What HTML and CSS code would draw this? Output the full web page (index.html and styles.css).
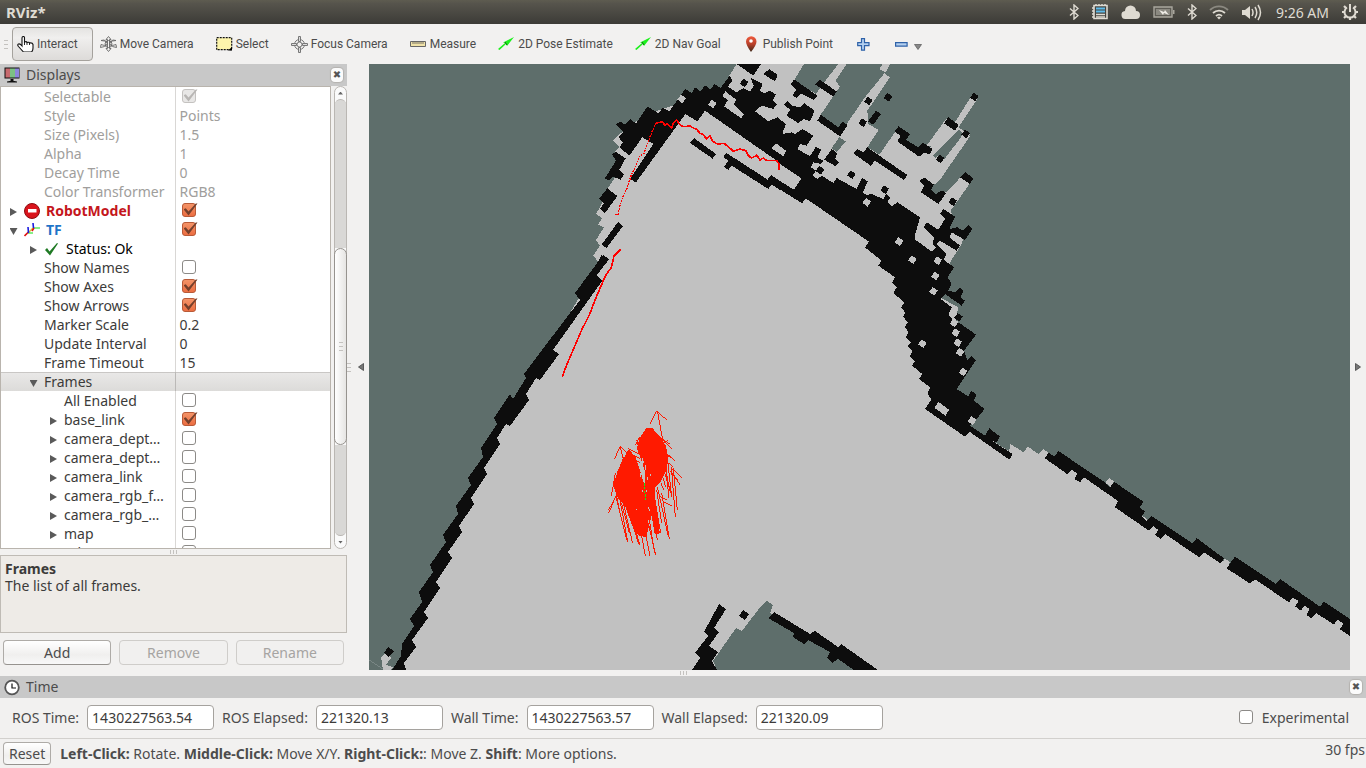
FILE: index.html
```html
<!DOCTYPE html>
<html lang="en">
<head>
<meta charset="utf-8">
<title>RViz*</title>
<link rel="stylesheet" href="styles.css">
</head>
<body>
<header class="titlebar">
  <h1 class="title">RViz*</h1>
  <div class="tray">
    <svg width="10" height="16" viewBox="0 0 10 16"><path d="M1 4.500l8 7L5 15V1l4 3.500-8 7" fill="none" stroke="#dfdbd2" stroke-width="1.400"/></svg>
    <svg width="18" height="17" viewBox="0 0 18 17"><path d="M3 1.500h13v13H3z" fill="#45443f" stroke="#dfdbd2" stroke-width="1.600"/><path d="M5 1v-1M8 1V0M11 1V0M14 1V0M1 4h2M1 7h2M1 10h2M1 13h2" stroke="#dfdbd2" stroke-width="1.400"/><path d="M5 4.500h9M5 7.500h9" stroke="#5db9e8" stroke-width="1.800"/><path d="M5 10.500h9M5 13h9" stroke="#dfdbd2" stroke-width="1.400"/></svg>
    <svg width="20" height="16" viewBox="0 0 20 16"><path d="M5 15a4 4 0 0 1-1-8 5.500 5.500 0 0 1 11 0 4 4 0 0 1 0 8z" fill="#dfdbd2"/></svg>
    <svg width="22" height="14" viewBox="0 0 22 14"><path d="M1 2h18v10H1z" fill="#5e5c55" stroke="#a9a69d" stroke-width="1.400"/><path d="M3 4h14v6H3z" fill="#8b8981"/><path d="M20 5h1.500v4H20z" fill="#a9a69d"/><path d="M6 5l5 2 1-2 4 5-5-2-1 2z" fill="#efece6"/></svg>
    <svg width="10" height="16" viewBox="0 0 10 16"><path d="M1 4.500l8 7L5 15V1l4 3.500-8 7" fill="none" stroke="#dfdbd2" stroke-width="1.400"/></svg>
    <svg width="20" height="15" viewBox="0 0 20 15"><g fill="none" stroke="#dfdbd2" stroke-width="1.800"><path d="M1 5a13 13 0 0 1 18 0" stroke="#8b8981"/><path d="M4 8a9 9 0 0 1 12 0"/><path d="M7 11a4.500 4.500 0 0 1 6 0"/></g><path d="M8 12.500l2-1 2 1-2 2z" fill="#dfdbd2"/></svg>
    <svg width="21" height="17" viewBox="0 0 21 17"><path d="M1 6h3l5-4v13l-5-4H1z" fill="#dfdbd2"/><path d="M11 5q2 3.500 0 7M14 3q3.500 5.500 0 11M17 1q5 7.500 0 15" fill="none" stroke="#dfdbd2" stroke-width="1.500"/></svg>
    <time class="clock">9:26 AM</time>
    <svg width="18" height="18" viewBox="0 0 18 18"><g fill="none" stroke="#dfdbd2"><path d="M6 4.500a5.500 5.500 0 1 0 6 0" stroke-width="2"/><path d="M9 1v8" stroke-width="2"/><path d="M1 9h3M14 9h3M9 14v3M3 3l2 2M15 3l-2 2M3 15l2-2M15 15l-2-2" stroke-width="2.200"/></g></svg>
  </div>
</header>

<nav class="toolbar">
  <span class="grip"></span>
  <button class="tool active"><svg width="17" height="16" viewBox="0 0 17 16"><path d="M5 10V2q0-1.500 1.300-1.500T7.500 2v4q2-1 2.500.500 2-.800 2.500.500 3-.500 3.500 1.500v3.500q0 3-1.500 4h-8L1.500 10.500Q0 8.500 1.500 8 3 7.500 5 10z" fill="#fff" stroke="#111" stroke-width="1.100"/><path d="M7.500 6v3M10 6.500V9M12.500 7v2" stroke="#111" stroke-width=".900"/></svg>Interact</button>
  <button class="tool"><svg width="17" height="16" viewBox="0 0 17 16"><g fill="#f2f1f0" stroke="#666" stroke-width=".900"><path d="M1 4.500l3.500.500 8 5.500 4 1-.500-3-3.500 1L4 4zM16 4.500l-3.500.500-8 5.500-4 1 .500-3 3.500 1L13 4z"/><path d="M8.500.500l2.500 3H9.500v9H11l-2.500 3-2.500-3h1.500v-9H6z"/><circle cx="8.500" cy="8" r="3.500" fill="none"/></g></svg>Move Camera</button>
  <button class="tool"><svg width="17" height="14" viewBox="0 0 17 14"><path d="M.700.700h15v12h-15z" fill="#fdf5ac" stroke="#111" stroke-width="1.200" stroke-dasharray="2 1"/><path d="M16 10v3.500h-4z"/></svg>Select</button>
  <button class="tool"><svg width="17" height="17" viewBox="0 0 17 17"><g fill="none" stroke="#777"><circle cx="8.500" cy="8.500" r="5"/><circle cx="8.500" cy="8.500" r="2.500"/><path d="M7.500.500h2v5h-2zM7.500 11.500h2v5h-2zM.500 7.500h5v2h-5zM11.500 7.500h5v2h-5z" fill="#ddd"/></g></svg>Focus Camera</button>
  <button class="tool"><svg width="17" height="8" viewBox="0 0 17 8"><path d="M.500 1.500h15v5h-15z" fill="#f0e2a8" stroke="#666"/><path d="M3 2v2M5 2v2M7 2v2M9 2v2M11 2v2M13 2v2" stroke="#555" stroke-width=".800"/></svg>Measure</button>
  <button class="tool"><svg width="17" height="14" viewBox="0 0 17 14"><path d="M0 12l7-6-2-.500L16 0 9 9l-1-2-6.500 6z" fill="#1cf01c"/><path d="M7 5l2 3" stroke="#156515"/></svg>2D Pose Estimate</button>
  <button class="tool"><svg width="17" height="14" viewBox="0 0 17 14"><path d="M0 12l7-6-2-.500L16 0 9 9l-1-2-6.500 6z" fill="#1cf01c"/><path d="M7 5l2 3" stroke="#156515"/></svg>2D Nav Goal</button>
  <button class="tool"><svg width="17" height="16" viewBox="0 0 17 16"><defs><linearGradient id="pin" x2="0" y2="1"><stop offset="0" stop-color="#f05a3c"/><stop offset=".5" stop-color="#b8402a"/><stop offset="1" stop-color="#3d2a1a"/></linearGradient></defs><path d="M8 16Q3 9 3 5.500a5 5 0 0 1 10.500 0Q13.500 9 8 16z" fill="url(#pin)"/><circle cx="8" cy="5" r="1.800" fill="#fff"/></svg>Publish Point</button>
  <button class="tool sign" aria-label="Add tool"><svg width="13" height="13" viewBox="0 0 13 13"><path d="M4.500.700h3v4h4.500v3H7.500v4.500h-3V7.700H.700v-3h3.800z" fill="#b4d0f0" stroke="#2f62a8" stroke-width="1.200"/></svg></button>
  <button class="tool sign" aria-label="Remove tool"><svg width="13" height="5" viewBox="0 0 13 5"><path d="M.600.600h11.500v3.500H.600z" fill="#b4d0f0" stroke="#2f62a8" stroke-width="1.200"/></svg><svg class="caret" width="8" height="6" viewBox="0 0 8 6"><path d="M.500.500h7L4 5.500z" fill="#888" stroke="#555" stroke-width=".700"/></svg></button>
</nav>

<main class="workspace">
  <aside class="displays">
    <div class="docktitle"><svg width="17" height="17" viewBox="0 0 17 17"><path d="M.500.500h15v11h-15z" fill="#111"/><path d="M1.500 1.500h4.500v9H1.500z" fill="#c76a6e"/><path d="M6 1.500h5v9H6z" fill="#7cc184"/><path d="M11 1.500h4v9h-4z" fill="#8d86dd"/><path d="M6.500 12h3v2h-3zM3 14.500q5-1.500 10 0v1H3z" fill="#111"/></svg><h2>Displays</h2><button class="close" aria-label="Close Displays">✖</button></div>
    <div class="treewrap">
      <div class="tree">
        <table>
          <colgroup><col class="c-name"><col></colgroup>
          <tbody>
          <tr class="off"><td class="l2"><i class="exp"></i>Selectable</td><td><input type="checkbox" checked disabled aria-label="Selectable"></td></tr>
          <tr class="off"><td class="l2"><i class="exp"></i>Style</td><td>Points</td></tr>
          <tr class="off"><td class="l2"><i class="exp"></i>Size (Pixels)</td><td>1.5</td></tr>
          <tr class="off"><td class="l2"><i class="exp"></i>Alpha</td><td>1</td></tr>
          <tr class="off"><td class="l2"><i class="exp"></i>Decay Time</td><td>0</td></tr>
          <tr class="off"><td class="l2"><i class="exp"></i>Color Transformer</td><td>RGB8</td></tr>
          <tr class="err"><td class="l1"><i class="exp shut"></i><svg class="ico" width="16" height="16" viewBox="0 0 16 16"><circle cx="8" cy="8" r="7.500" fill="#d9141c" stroke="#8d0c10"/><path d="M4 6h8.500v3.500H4z" fill="#fff"/></svg>RobotModel</td><td><input type="checkbox" checked aria-label="RobotModel"></td></tr>
          <tr class="tf"><td class="l1"><i class="exp open"></i><svg class="ico" width="16" height="16" viewBox="0 0 16 16"><g fill="none" stroke-width="1.200"><path d="M9 6L5 10" stroke="#d8c030"/><path d="M9.500 6h6.500M4 11h5" stroke="#10e010"/><path d="M10 6l-2 3M4.500 10l-4 4" stroke="#e01010" stroke-width="1.600"/><path d="M9 1l.500 5M4 5l.500 6" stroke="#1a1ae0" stroke-width="1.600"/></g></svg>TF</td><td><input type="checkbox" checked aria-label="TF"></td></tr>
          <tr class="ok"><td class="l2"><i class="exp shut"></i><svg class="ico" width="16" height="16" viewBox="0 0 16 16"><path d="M1 9l2-2 2.500 3.500L13 2l1 .500-8 12z" fill="#1f7a24"/></svg>Status: Ok</td><td></td></tr>
          <tr><td class="l2"><i class="exp"></i>Show Names</td><td><input type="checkbox" aria-label="Show Names"></td></tr>
          <tr><td class="l2"><i class="exp"></i>Show Axes</td><td><input type="checkbox" checked aria-label="Show Axes"></td></tr>
          <tr><td class="l2"><i class="exp"></i>Show Arrows</td><td><input type="checkbox" checked aria-label="Show Arrows"></td></tr>
          <tr><td class="l2"><i class="exp"></i>Marker Scale</td><td>0.2</td></tr>
          <tr><td class="l2"><i class="exp"></i>Update Interval</td><td>0</td></tr>
          <tr><td class="l2"><i class="exp"></i>Frame Timeout</td><td>15</td></tr>
          <tr class="sel"><td class="l2"><i class="exp open"></i>Frames</td><td></td></tr>
          <tr><td class="l3"><i class="exp"></i>All Enabled</td><td><input type="checkbox" aria-label="All Enabled"></td></tr>
          <tr><td class="l3"><i class="exp shut"></i>base_link</td><td><input type="checkbox" checked aria-label="base_link"></td></tr>
          <tr><td class="l3"><i class="exp shut"></i>camera_dept…</td><td><input type="checkbox" aria-label="camera depth frame"></td></tr>
          <tr><td class="l3"><i class="exp shut"></i>camera_dept…</td><td><input type="checkbox" aria-label="camera depth optical frame"></td></tr>
          <tr><td class="l3"><i class="exp shut"></i>camera_link</td><td><input type="checkbox" aria-label="camera_link"></td></tr>
          <tr><td class="l3"><i class="exp shut"></i>camera_rgb_f…</td><td><input type="checkbox" aria-label="camera rgb frame"></td></tr>
          <tr><td class="l3"><i class="exp shut"></i>camera_rgb_…</td><td><input type="checkbox" aria-label="camera rgb optical frame"></td></tr>
          <tr><td class="l3"><i class="exp shut"></i>map</td><td><input type="checkbox" aria-label="map"></td></tr>
          <tr><td class="l3"><i class="exp shut"></i>odom</td><td><input type="checkbox" aria-label="odom"></td></tr>
          </tbody>
        </table>
      </div>
      <div class="scroll">
        <button aria-label="Scroll up"><i class="up"></i></button>
        <span class="before"></span><span class="thumb"><i class="grip"></i></span><span class="after"></span>
        <button aria-label="Scroll down"><i class="down"></i></button>
      </div>
    </div>
    <div class="hsplit"><i></i></div>
    <section class="desc"><strong>Frames</strong><p>The list of all frames.</p></section>
    <div class="actions"><button class="btn">Add</button><button class="btn" disabled>Remove</button><button class="btn" disabled>Rename</button></div>
  </aside>

  <div class="vsplit"><span class="grip"></span><button aria-label="Collapse left"><svg width="6" height="8" viewBox="0 0 6 8"><path d="M5.500.500v7L.500 4z" fill="#777" stroke="#444" stroke-width=".800"/></svg></button></div>

  <section class="view" aria-label="Map view">
    <svg viewBox="369 64 981 606" preserveAspectRatio="xMinYMin slice" shape-rendering="crispEdges">
      <defs><path id="c" d="M-2-13L13-3 3 13-13 2z"/></defs>
      <g fill="#c1c1c1">
        <path d="M398 670L545 375 603 256 640 140 760 100 900 200 960 420 1010 452 1350 625V670z"/>
        <g transform="translate(580 64) scale(.33333)"><path d="M40 575L60 545 48 528 72 490 55 482 66 462 48 450 60 430 85 370 105 340 130 290 105 262 118 248 100 230 112 215 200 150 420 80 470 0H780V600H60z"/></g>
      </g>
      <g transform="translate(780 64) scale(.33333)">
        <path fill="#5e6e6b" d="M0 0H800V1180L690 1160 500 900 400 500 0 300z"/>
        <path fill="#c1c1c1" d="M0 0H72L42 50 108 90 138 48 175 0H200L167 50 180 68 120 155 180 210 200 180 255 100 313 28 330 40 262 140 265 180 296 198 262 250 298 272 348 200 420 275 455 245 440 245 498 165 525 175 575 95 592 105 535 190 570 212 462 362 450 375 480 410 500 380 545 325 572 355 512 440 520 460 505 500 550 520 545 540 510 595 480 700 535 730 520 800 540 880 480 1000 550 1110 0 1100zM298 15L308 0H330L318 25z"/>
      </g>
      <path fill="#c1c1c1" d="M398 670L380 640 480 420 560 320 620 240 790 185 880 250 920 400 940 430V670z"/>
      <path fill="#5e6e6b" d="M369 64H560L600 250 580 296 548 350 535 378 518 402 490 442 473 488 452 530 442 560 426 602 408 640 401 662 397 670H369z"/>
      <g fill="#c1c1c1" transform="translate(580 64) scale(.33333)"><path d="M40 575L60 545 48 528 72 490 55 482 66 462 48 450 60 430 85 370 105 340 130 290 105 262 118 248 100 230 112 215 200 240V600H60z"/></g>
      <g transform="translate(900 400) scale(.33333)">
        <path fill="#c1c1c1" d="M0 60L205 100 325 160 332 132 370 157 384 140 415 162 430 147 448 160 520 205 618 258 690 315 760 375 900 445 962 485 985 498 1050 525 1128 565 1250 630 1350 685V810H0z"/>
        <path d="M445 158L463 170 475 153 618 249 630 262 643 246 730 305 720 322 735 335 725 350 740 362 755 348 878 430 890 414 972 475 962 490 912 457 898 472 795 402 782 416 765 405 775 390 760 378 747 392 645 322 654 303 552 232 540 247 523 237 532 222 516 208 503 223 435 175zM1005 470L1128 552 1140 537 1260 620 1272 605 1350 657V708L1320 688 1330 672 1313 658 1302 674 1250 640 1235 655 1220 645 1228 627 1213 617 1203 632 1186 620 1195 603 1178 592 1167 607 1065 538 1050 551 980 505 992 487z" fill="#0d0d0d"/>
        <g fill="#c1c1c1"><use href="#c" x="629" y="247"/><use href="#c" x="977" y="489"/></g>
      </g>
      <g transform="translate(580 64) scale(.33333)">
        <path fill="#0d0d0d" d="M108 182L120 172 135 182 150 165 168 178 203 127 235 148 248 132 268 142 316 74 335 88 345 70 362 82 375 64 392 76 403 60 422 72 448 36 458 48 444 68 470 85 490 72 510 82 522 65 510 40 548 60 540 80 552 88 570 80 588 92 578 108 590 122 580 135 545 125 525 142 565 172 592 160 618 180 600 205V297L375 140 352 172 316 150 168 355 150 345 220 240 187 220 148 275 118 250 128 235 115 218 130 205zM438 266L563 347 573 333 600 351V378L575 362 565 375 455 305 445 318 432 308 445 290 430 280zM470 0H543L520 35zM568 15L593 33 585 52 550 30zM95 270L108 264 137 283 118 317 131 332 122 347 100 338 88 350 75 343 108 290zM82 373L112 396 75 447 60 435 72 418 57 405zM114 474L129 486 80 552 65 542zM65 573L85 588 78 600H50zM342 222L408 270 398 284 330 237z"/>
        <use href="#c" x="492" y="57" fill="#0d0d0d"/>
        <path fill="#c1c1c1" d="M436 82L468 107 462 122 492 150 484 163 432 127 444 108 427 97zM588 238L618 260 610 277 575 253z"/>
        <g fill="#c1c1c1"><use href="#c" x="397" y="120"/><use href="#c" x="305" y="105"/></g>
      </g>
      <g transform="translate(780 64) scale(.33333)">
        <path fill="#0d0d0d" d="M-2 172L18 180 10 200 8 210 36 205 45 210 68 195 100 215 80 245 60 240 52 255 90 277 108 248 124 257 112 280 130 290 122 300 100 295 92 310 108 320 98 335 112 345 125 335 160 357 170 342 230 375 246 342 264 352 248 385 262 395 270 388 310 405 318 390 330 402 322 415 335 428 352 415 420 460 403 520 450 560 465 547 495 590 522 610 503 640 515 660 505 680 525 685 540 670 550 680 542 700 555 710 545 725 495 690 482 705 515 730 505 750 520 770 540 778 588 812 552 860 562 890 574 876 588 888 530 975 565 997 573 980 590 992 582 1010 614 1035 590 1065 570 1085 615 1115 628 1093 660 1118 650 1135 635 1130 698 1170 688 1187 568 1103 555 1118 435 1035 455 1005 442 990 450 970 417 945 427 930 396 905 405 892 390 877 397 862 383 848 392 835 378 820 385 803 375 790 383 775 370 758 375 745 363 730 373 715 340 687 350 670 337 655 345 640 295 605 305 590 255 550 267 533 77 403 66 418-2 375z"/>
        <path fill="#0d0d0d" d="M42 46L112 95 102 108 62 88 50 103 38 93 48 78 32 62zM120 48L170 82 160 98 106 62zM22 112L38 125 60 130 72 117 104 140 90 172 70 165 55 178 20 155 30 137 12 122zM122 152L175 190 188 173 203 183 180 217 112 170zM288 140L303 150 280 182 264 172zM355 187L390 210 378 228 415 250 428 235 458 255 448 272 435 265 417 278 352 232 362 215 344 203zM232 255L250 265 262 250 382 333 372 348 285 290 272 305 220 268zM505 160L536 183 525 200 492 178zM548 318L580 343 570 360 535 337zM432 340L462 362 453 377 468 390 485 378 498 388 475 420 423 385 433 365 418 352zM490 435L525 458 508 495 532 490 550 500 565 483 577 495 555 528 515 505 508 520 540 545 530 560 480 530 470 540 500 570 490 590 455 560 462 520 430 490 440 475 475 497 495 465 480 450zM155 255L172 268 165 285 177 295 167 307 133 287z"/>
        <path fill="#c1c1c1" d="M-2 299L64 343 42 377-2 350zM-12 238L18 260 10 277-25 253zM428 494L460 520 455 540 470 550 455 562 403 525zM475 1013L507 1037 497 1055 463 1032zM690 1140L720 1160 715 1170 690 1162z"/>
        <path fill="#5e6e6b" d="M178 220L197 232 170 265 155 252zM537 196L551 210 494 284 480 272 466 282 460 275zM465 360L535 260 560 320 500 385 480 378 468 390 453 377z"/>
        <path fill="#c1c1c1" d="M552 205L570 217 478 350 462 362 455 355z"/>
        <g fill="#0d0d0d"><use href="#c" x="265" y="111"/><use href="#c" x="324" y="100"/><use href="#c" x="583" y="99"/><use href="#c" x="557" y="210"/><use href="#c" x="480" y="285"/><use href="#c" x="518" y="413"/><use href="#c" x="248" y="176"/><use href="#c" x="214" y="332"/><use href="#c" x="314" y="377"/><use href="#c" x="120" y="319"/><use href="#c" x="535" y="760"/></g>
        <g fill="#c1c1c1"><use href="#c" x="260" y="415"/><use href="#c" x="357" y="533"/><use href="#c" x="397" y="587"/><use href="#c" x="473" y="590"/><use href="#c" x="466" y="636"/><use href="#c" x="460" y="682"/><use href="#c" x="522" y="777"/><use href="#c" x="527" y="806"/><use href="#c" x="533" y="836"/><use href="#c" x="540" y="865"/><use href="#c" x="427" y="839"/><use href="#c" x="549" y="924"/><use href="#c" x="576" y="1070"/></g>
      </g>
      <path fill="#0d0d0d" d="M603 255L609 259 597 275 602 281 553 350 559 354 540 380 536 378 526 394 529 400 510 426 506 424 497 438 500 444 484 468 487 474 471 498 474 504 459 526 462 532 448 552 452 558 436 582 440 588 424 612 428 618 412 640 416 647 404 663 406 670H392L401 656 402 644 414 626 410 619 422 602 419 592 433 572 430 565 446 542 443 535 458 514 456 506 471 485 468 478 483 457 481 448 497 424 494 418 510 394 513 399 526 378 524 374 542 350 580 300 575 293z"/>
      <path fill="#c1c1c1" d="M381 657L386 653 391 658 386 665 393 667 391 670H383z"/>
      <path fill="#0d0d0d" d="M388 647L394 651 389 657 384 653z"/>
      <path d="M369 660L383 669" stroke="#8c9694" stroke-width=".6"/>
      <path fill="#5e6e6b" d="M767 601L773 605 770 613 876 670H717L713 661 736 628 742 631 761 606z"/>
      <path fill="#0d0d0d" d="M719 604L726 609 714 628 719 632 709 646 718 652 712 661 717 670H692L700 658 695 653 708 636 704 632zM743 610L749 614 745 620 739 616zM774 612L810 634 815 631 838 647 841 644 878 670H854L838 659 832 663 827 658 830 652 808 640 804 644 793 637 794 633 768 618z"/>
      <g fill="none" stroke="#f00">
        <g transform="translate(580 64) scale(.33333)" stroke-width="4"><path stroke-dasharray="5 3" d="M106 452H114L120 425 130 395 140 375 155 330 165 310 180 275 192 268 206 230 215 205 228 178"/><path stroke-width="5" d="M225 180L232 176 248 174 254 184 262 180 275 192 280 178 290 168 300 182 310 188 330 186 340 192 350 196 360 208 368 210 380 225 390 215 398 232 412 240 432 238 445 248 460 262 480 255 497 260 505 275 515 282 530 274 540 288 550 282 560 290 590 290 598 302V318"/></g>
        <g transform="translate(540 240) scale(.33333)" stroke-width="5"><path d="M242 28L222 48 214 82 195 110 165 180 148 225 125 270 95 340 80 375 67 410"/></g>
      </g>
      <g transform="translate(540 240) scale(.33333)" fill="#ff1a00" stroke="#ff1a00" stroke-width="3">
        <path d="M318 567L336 565 356 588 376 618 384 655 378 690 360 725 345 740 345 790 358 880 345 880 335 820 318 890 296 885 275 850 258 800 235 775 222 740 235 690 252 655 266 630 285 650 298 690 312 735 318 700 302 650 292 625 300 595z"/>
        <path fill="none" d="M350 512L330 552M350 512L380 540M352 512L370 610M241 620L223 657M241 620L264 640M241 622L252 665M300 590L286 616M336 568L395 625M350 586L390 612M370 630L404 663M376 645L397 655M392 682L425 712M390 692L420 734M400 684L412 810M394 680L406 830M384 672L395 770M378 665L386 775M365 760L388 898M352 740L385 890M340 750L362 880M335 800L352 900M318 820L347 945M328 840L344 940M310 850L330 948M300 860L316 948M280 850L300 916M262 800L296 912M250 790L278 910M240 780L263 905M228 770L260 900M245 790L268 880M235 750L206 820M226 700L214 768M222 780L206 810M228 760L242 830M350 750L365 850M360 770L380 780M370 785L395 798M264 626L298 642M268 640L300 656M275 652L300 668M252 650L220 735M320 660L332 740M378 700L392 760M372 690L386 740M400 680L365 655M385 600L350 620M370 715L376 740M362 728L372 750M395 700L415 720M290 600L300 640"/>
        <path fill="none" stroke="#c1c1c1" d="M307 655L313 730M316 675L318 690M300 680L304 685M330 702L331 708M318 750L320 756M288 806L289 811M325 840L326 848M300 700L302 710M312 662V668M322 712L323 720M326 800L328 812M308 750L309 755"/>
        <path fill="none" stroke="#18e818" stroke-dasharray="7 4" d="M313 730V750L318 780"/>
      </g>
    </svg>
  </section>

  <div class="rsplit"><button aria-label="Collapse right"><svg width="6" height="8" viewBox="0 0 6 8"><path d="M.500.500v7l5-3.500z" fill="#777" stroke="#444" stroke-width=".800"/></svg></button></div>
</main>

<div class="hsplit"><i></i></div>

<section class="time">
  <div class="docktitle"><svg width="17" height="17" viewBox="0 0 17 17"><circle cx="8" cy="8.500" r="6.800" fill="#fff" stroke="#555" stroke-width="1.800"/><path d="M8 4.500v4.500h4" fill="none" stroke="#111" stroke-width="1.200"/></svg><h2>Time</h2><button class="close" aria-label="Close Time">✖</button></div>
  <form class="fields">
    <label for="rt">ROS Time:</label><input id="rt" type="text" value="1430227563.54">
    <label for="re">ROS Elapsed:</label><input id="re" type="text" value="221320.13">
    <label for="wt">Wall Time:</label><input id="wt" type="text" value="1430227563.57">
    <label for="we">Wall Elapsed:</label><input id="we" type="text" value="221320.09">
    <label class="exper"><input type="checkbox">Experimental</label>
  </form>
</section>

<footer class="status">
  <button class="btn">Reset</button>
  <p><b>Left-Click:</b> Rotate. <b>Middle-Click:</b> Move X/Y. <b>Right-Click:</b>: Move Z. <b>Shift</b>: More options.</p>
  <span class="fps">30 fps</span>
</footer>
</body>
</html>
```
FILE: styles.css
```css
* { box-sizing: border-box; }
body {
  margin: 0;
  height: 100vh;
  display: flex;
  flex-direction: column;
  overflow: hidden;
  background: #f2f1f0;
  color: #4c4c4c;
  font: 14px/19px "Noto Sans", "Open Sans", sans-serif;
}
h1, h2, p { margin: 0; font-weight: normal; font-size: inherit; }
button, input { font: inherit; color: inherit; }
button { margin: 0; padding: 0; border: 0; background: none; }
svg { flex: none; }

.titlebar {
  flex: none;
  height: 24px;
  display: flex;
  align-items: center;
  justify-content: space-between;
  padding: 0 7px 0 6px;
  background: linear-gradient(#5e5c50, #56544c 15%, #3c3b37);
  color: #dfdbd2;
}
.title { font-weight: bold; font-size: 15px; }
.tray { display: flex; align-items: center; gap: 12px; }
.clock { margin-left: 2px; }

.toolbar {
  flex: none;
  height: 40px;
  display: flex;
  align-items: center;
  gap: 2px;
  padding-left: 4px;
}
.grip {
  width: 4px;
  height: 9px;
  background: repeating-linear-gradient(#c4c2bf 0 1px, transparent 1px 4px);
}
.toolbar .grip { margin-right: 2px; }
.tool {
  display: flex;
  align-items: center;
  gap: 3px;
  height: 34px;
  padding: 0 14px 0 4px;
  border: 1px solid transparent;
  border-radius: 4px;
  font: 12px/16px Roboto, "Noto Sans", sans-serif;
}
.tool.active {
  border-color: #a5a29d;
  background: linear-gradient(#e4e3e1, #f0efee 30%, #dddbd9);
}
.tool.sign { padding: 0 15px 0 6px; }
.caret { margin: 6px 0 0 3px; }

.workspace { flex: 1; min-height: 0; display: flex; }
.displays { flex: none; width: 347px; display: flex; flex-direction: column; padding-bottom: 5px; }
.docktitle {
  flex: none;
  height: 22px;
  display: flex;
  align-items: center;
  gap: 5px;
  padding: 0 4px;
  background: #c8c8c8;
}
.docktitle h2 { flex: 1; padding-bottom: 2px; }
.close {
  width: 12px;
  height: 14px;
  border-radius: 4px;
  background: #fbfbfb;
  box-shadow: 0 0 1px 1px #b4b2af;
  font: 10px/14px "DejaVu Sans", sans-serif;
  color: #555;
}

.treewrap { flex: 1; min-height: 0; display: flex; gap: 3px; }
.tree { flex: 1; overflow: hidden; background: #fff; border: 1px solid #b9b4ad; }
table { width: 100%; border-collapse: collapse; table-layout: fixed; color: #3c3b3a; }
.c-name { width: 174px; }
tr { height: 19px; }
td { height: 19px; padding: 0 0 0 4px; line-height: 19px; white-space: nowrap; overflow: hidden; }
td:first-child { border-right: 1px solid #d9d7d5; }
td.l1 { padding-left: 2px; }
td.l2 { padding-left: 22px; }
td.l3 { padding-left: 42px; }
.off { color: #a09e9c; }
.ok { color: #000; }
.err { color: #c4161c; font-weight: bold; }
.tf { color: #1f75c8; font-weight: bold; }
.sel { background: linear-gradient(#c9c7c5 0 1px, #e9e8e7 1px, #dcdbd9); }
.sel td:first-child { border-color: #bbb9b7; }
.exp { display: inline-flex; width: 21px; height: 10px; justify-content: center; }
.shut::before, .open::before { content: ""; width: 7px; height: 8px; background: #5a5a5a; clip-path: polygon(0 0, 100% 50%, 0 100%); }
.open::before { width: 8px; height: 7px; clip-path: polygon(0 0, 100% 0, 50% 100%); }
.ico { margin-right: 6px; vertical-align: -3px; }

input[type="checkbox"] {
  appearance: none;
  position: relative;
  width: 14px;
  height: 14px;
  margin: 2px;
  vertical-align: top;
  border: 1px solid #8c8a87;
  border-radius: 3px;
  background: #fff;
}
input[type="checkbox"]:checked { background: linear-gradient(#f49468, #ec6e42); border-color: #b85a38; }
input[type="checkbox"]:checked::after {
  content: "";
  position: absolute;
  left: 1px;
  top: -1px;
  width: 14px;
  height: 13px;
  background: #75402c;
  clip-path: polygon(0 48%, 16% 40%, 36% 66%, 88% 4%, 100% 4%, 36% 96%);
}
input[type="checkbox"]:disabled { background: #e8e7e6; border-color: #c4c2c0; }
input[type="checkbox"]:disabled::after { background: #b8b6b4; }

.scroll {
  width: 13px;
  display: flex;
  flex-direction: column;
  border: 1px solid #bab7b3;
  border-radius: 7px;
  background: #fafafa;
}
.scroll button { height: 12px; display: flex; align-items: center; justify-content: center; }
.scroll .before, .scroll .after { background: #d9d8d6; border: solid #bab7b3; border-width: 1px 0 0; }
.scroll .before { flex: 149; border-radius: 6px 6px 0 0; }
.scroll .after { flex: 91; border-width: 0 0 1px; border-radius: 0 0 6px 6px; }
.scroll .thumb {
  flex: 197;
  margin: 0 -1px;
  display: flex;
  align-items: center;
  justify-content: center;
  border: 1px solid #96938f;
  border-radius: 7px;
  background: linear-gradient(90deg, #fff, #e6e5e3);
}
.up, .down { width: 5px; height: 3px; background: #666; clip-path: polygon(50% 0, 100% 100%, 0 100%); }
.down { clip-path: polygon(0 0, 100% 0, 50% 100%); }

.hsplit { flex: none; height: 6px; display: flex; align-items: center; justify-content: center; }
.hsplit i { width: 7px; height: 4px; background: repeating-linear-gradient(90deg, #c4c2bf 0 1px, transparent 1px 3px); }
.desc {
  flex: none;
  min-height: 78px;
  padding: 4px;
  border: 1px solid #bfbbb5;
  background: #eeebe7;
  color: #3c3b3a;
  line-height: 17px;
}
.actions { display: flex; gap: 8px; padding: 7px 3px 0; }
.actions .btn { flex: 1; height: 25px; }
.btn {
  padding: 0 5px;
  border: 1px solid #aeaba7;
  border-bottom-color: #96938f;
  border-radius: 4px;
  background: linear-gradient(#fff, #f0efee 60%, #f8f8f8);
}
.btn:disabled { color: #a6a4a2; border-color: #cfcdca; background: #f1f0ef; }

.vsplit { flex: none; width: 22px; display: flex; align-items: center; gap: 7px; }
.vsplit button, .rsplit button { display: flex; }
.rsplit { flex: none; width: 16px; display: flex; align-items: center; justify-content: center; }
.view { flex: 1; min-width: 0; background: #5e6e6b; overflow: hidden; }
.view svg { display: block; width: 100%; height: 100%; }

.time { flex: none; border-bottom: 1px solid #d2d0cd; }
.fields { display: flex; align-items: center; gap: 8px; height: 40px; padding: 0 17px 2px 12px; }
.fields input[type="text"] {
  width: 127px;
  height: 25px;
  padding: 0 4px;
  border: 1px solid #a5a29e;
  border-radius: 4px;
  background: #fff;
  color: #3c3b3a;
}
.exper { display: flex; align-items: center; gap: 7px; margin-left: auto; }
.status { flex: none; display: flex; align-items: center; gap: 9px; height: 29px; padding: 0 1px 0 3px; }
.status .btn { height: 23px; line-height: 19px; }
.fps { margin: 0 0 8px auto; }
```
